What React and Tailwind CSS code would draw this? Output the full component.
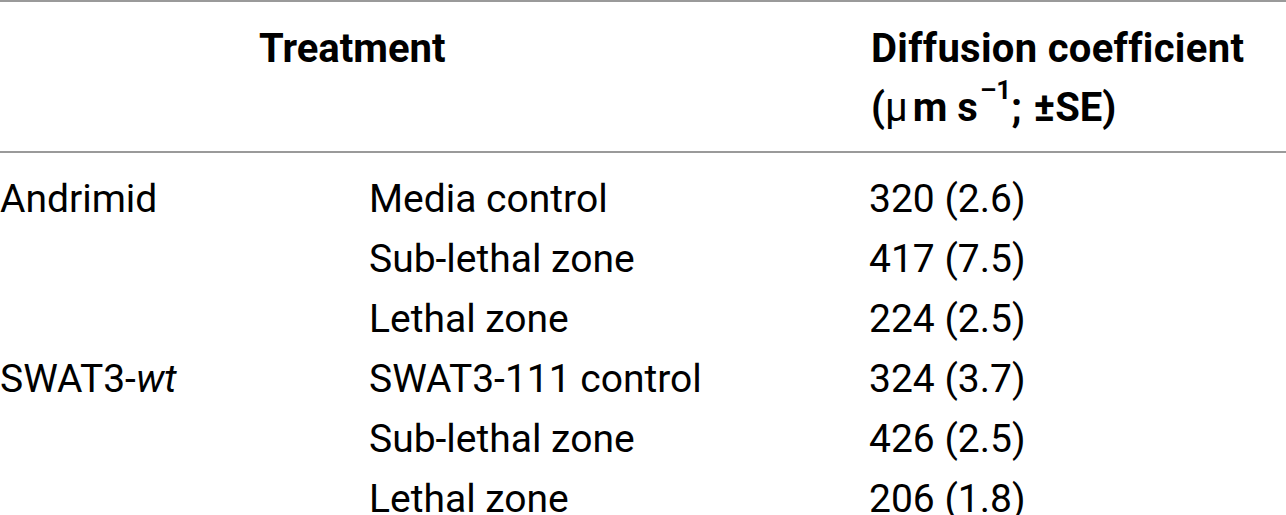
import React from "react";

const rows = [
  { group: "Andrimid", italic: null, treatment: "Media control", value: "320 (2.6)" },
  { group: "", treatment: "Sub-lethal zone", value: "417 (7.5)" },
  { group: "", treatment: "Lethal zone", value: "224 (2.5)" },
  { group: "SWAT3-", italic: "wt", treatment: "SWAT3-111 control", value: "324 (3.7)" },
  { group: "", treatment: "Sub-lethal zone", value: "426 (2.5)" },
  { group: "", treatment: "Lethal zone", value: "206 (1.8)" },
];

const App = () => {
  return (
    <div
      className="w-[1286px] h-[515px] overflow-hidden bg-white text-black"
      style={{ fontFamily: "Roboto, 'Liberation Sans', sans-serif" }}
    >
      <div className="border-t-2 border-b-2 border-[#9a9a9a] pt-[17px] pb-[14px]">
        <div className="grid grid-cols-[871px_1fr] text-[40px] leading-[59px] font-bold">
          <div className="pl-[259px]">Treatment</div>
          <div>
            <div className="tracking-[0.3px]">Diffusion coefficient</div>
            <div className="whitespace-nowrap">
              (<span className="font-normal">μ</span>
              <span className="ml-[5px]">m</span>
              <span className="ml-[10px]">s</span>
              <span className="relative -top-[22px] text-[26px] leading-none ml-[2px]">
                –1
              </span>
              ;<span className="ml-[12px]">±SE)</span>
            </div>
          </div>
        </div>
      </div>
      <div className="pt-[16px]">
        {rows.map((row, i) => (
          <div
            key={i}
            className="grid grid-cols-[369px_500px_1fr] text-[39px] leading-[60px]"
          >
            <div>
              {row.group}
              {row.italic && <i>{row.italic}</i>}
            </div>
            <div>{row.treatment}</div>
            <div>{row.value}</div>
          </div>
        ))}
      </div>
    </div>
  );
};

export default App;
